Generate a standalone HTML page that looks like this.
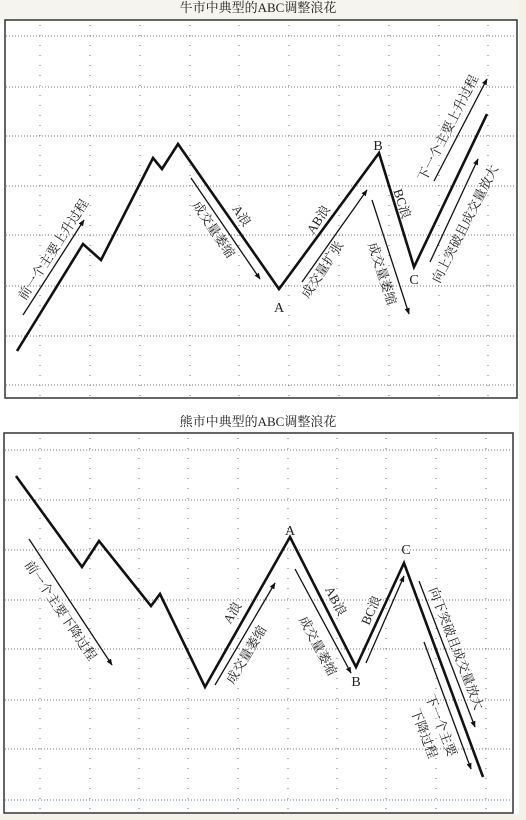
<!DOCTYPE html>
<html><head><meta charset="utf-8"><style>
html,body{margin:0;padding:0;background:#f4f1e8;width:526px;height:820px;overflow:hidden}
svg{display:block}
text{font-family:"Liberation Serif","Noto Serif CJK SC","Noto Sans CJK SC",serif;fill:#222}
.t{font-size:13px}
.l{font-size:14px}
</style></head><body>
<svg width="526" height="820" viewBox="0 0 526 820">
<defs>
<marker id="ah" viewBox="0 0 10 10" refX="9" refY="5" markerWidth="5" markerHeight="5" orient="auto"><path d="M0,1 L10,5 L0,9 z" fill="#111"/></marker>
</defs>
<rect x="0" y="0" width="519" height="820" fill="#fff"/>
<rect x="0" y="0" width="519" height="20" fill="#f6f4ee"/>
<rect x="0" y="814" width="526" height="6" fill="#f4f1e8"/>
<text x="258" y="12" text-anchor="middle" class="t">牛市中典型的ABC调整浪花</text>
<text x="258" y="426" text-anchor="middle" class="t">熊市中典型的ABC调整浪花</text>

<g>
<rect x="5" y="20" width="512" height="378" fill="#fff" stroke="#333" stroke-width="1.5"/>
<g stroke="#777" stroke-width="1" stroke-dasharray="1 2">
<line x1="6" y1="36" x2="516" y2="36"/><line x1="6" y1="87" x2="516" y2="87"/><line x1="6" y1="136" x2="516" y2="136"/><line x1="6" y1="186" x2="516" y2="186"/><line x1="6" y1="235" x2="516" y2="235"/><line x1="6" y1="286" x2="516" y2="286"/><line x1="6" y1="336" x2="516" y2="336"/><line x1="6" y1="385" x2="516" y2="385"/>
</g>
<g stroke="#888" stroke-width="1.2" stroke-dasharray="1 9">
<line x1="40" y1="25" x2="40" y2="396"/><line x1="90" y1="25" x2="90" y2="396"/><line x1="140" y1="25" x2="140" y2="396"/><line x1="190" y1="25" x2="190" y2="396"/><line x1="239" y1="25" x2="239" y2="396"/><line x1="289" y1="25" x2="289" y2="396"/><line x1="339" y1="25" x2="339" y2="396"/><line x1="389" y1="25" x2="389" y2="396"/><line x1="439" y1="25" x2="439" y2="396"/><line x1="488" y1="25" x2="488" y2="396"/>
</g>
<polyline points="17,351 83,244 101,260 153,158 162,169 178,144 279,289 379,153 414,267 487,114" fill="none" stroke="#111" stroke-width="2.6" stroke-linejoin="miter"/>
<g stroke="#111" stroke-width="1.3" marker-end="url(#ah)">
<line x1="23" y1="315" x2="84" y2="220"/><line x1="191" y1="178" x2="260" y2="279"/><line x1="302" y1="282" x2="367" y2="190"/><line x1="372" y1="200" x2="409" y2="314"/><line x1="434" y1="181" x2="487" y2="79"/><line x1="430" y1="262" x2="478" y2="159"/>
</g>
<text class="t" transform="translate(57,252) rotate(-57)" text-anchor="middle">前一个主要上升过程</text>
<text class="t" transform="translate(210,232) rotate(56)" text-anchor="middle">成交量萎缩</text>
<text class="t" transform="translate(238,218) rotate(56)" text-anchor="middle">A浪</text>
<text class="t" transform="translate(322,222) rotate(-57)" text-anchor="middle">AB浪</text>
<text class="t" transform="translate(326,272) rotate(-57)" text-anchor="middle">成交量扩张</text>
<text class="t" transform="translate(398,205) rotate(72)" text-anchor="middle">BC浪</text>
<text class="t" transform="translate(378,275) rotate(72)" text-anchor="middle">成交量萎缩</text>
<text class="t" transform="translate(452,130) rotate(-63)" text-anchor="middle">下一个主要上升过程</text>
<text class="t" transform="translate(469,226) rotate(-63)" text-anchor="middle">向上突破且成交量放大</text>
<text class="l" x="279" y="312" text-anchor="middle">A</text>
<text class="l" x="378" y="150" text-anchor="middle">B</text>
<text class="l" x="414" y="284" text-anchor="middle">C</text>
</g>

<g>
<rect x="4" y="433" width="509" height="380" fill="#fff" stroke="#333" stroke-width="1.5"/>
<g stroke="#777" stroke-width="1" stroke-dasharray="1 2">
<line x1="5" y1="450" x2="512" y2="450"/><line x1="5" y1="500" x2="512" y2="500"/><line x1="5" y1="550" x2="512" y2="550"/><line x1="5" y1="600" x2="512" y2="600"/><line x1="5" y1="649" x2="512" y2="649"/><line x1="5" y1="700" x2="512" y2="700"/><line x1="5" y1="749" x2="512" y2="749"/><line x1="5" y1="800" x2="512" y2="800"/>
</g>
<g stroke="#888" stroke-width="1.2" stroke-dasharray="1 9">
<line x1="40" y1="438" x2="40" y2="811"/><line x1="90" y1="438" x2="90" y2="811"/><line x1="139" y1="438" x2="139" y2="811"/><line x1="188" y1="438" x2="188" y2="811"/><line x1="238" y1="438" x2="238" y2="811"/><line x1="288" y1="438" x2="288" y2="811"/><line x1="337" y1="438" x2="337" y2="811"/><line x1="386" y1="438" x2="386" y2="811"/><line x1="436" y1="438" x2="436" y2="811"/><line x1="486" y1="438" x2="486" y2="811"/>
</g>
<polyline points="16,476 82,567 99,541 151,606 160,594 205,687 290,537 356,667 404,563 483,777" fill="none" stroke="#111" stroke-width="2.6" stroke-linejoin="miter"/>
<g stroke="#111" stroke-width="1.3" marker-end="url(#ah)">
<line x1="29" y1="539" x2="112" y2="665"/><line x1="215" y1="685" x2="275" y2="583"/><line x1="295" y1="569" x2="351" y2="673"/><line x1="366" y1="663" x2="404" y2="576"/><line x1="419" y1="581" x2="475" y2="727"/><line x1="424" y1="642" x2="471" y2="769"/>
</g>
<text class="t" transform="translate(57,613) rotate(56)" text-anchor="middle">前一个主要下降过程</text>
<text class="t" transform="translate(236,615) rotate(-59)" text-anchor="middle">A浪</text>
<text class="t" transform="translate(250,657) rotate(-59)" text-anchor="middle">成交量萎缩</text>
<text class="t" transform="translate(332,603) rotate(62)" text-anchor="middle">AB浪</text>
<text class="t" transform="translate(314,648) rotate(62)" text-anchor="middle">成交量萎缩</text>
<text class="t" transform="translate(375,612) rotate(-66)" text-anchor="middle">BC浪</text>
<text class="t" transform="translate(452,650) rotate(69)" text-anchor="middle">向下突破且成交量放大</text>
<text class="t" transform="translate(437,727) rotate(69)" text-anchor="middle">下一个主要</text>
<text class="t" transform="translate(420,735) rotate(69)" text-anchor="middle">下降过程</text>
<text class="l" x="290" y="535" text-anchor="middle">A</text>
<text class="l" x="356" y="686" text-anchor="middle">B</text>
<text class="l" x="406" y="554" text-anchor="middle">C</text>
</g>
<rect x="519" y="0" width="7" height="820" fill="#f4f1e8"/>
</svg>
</body></html>
